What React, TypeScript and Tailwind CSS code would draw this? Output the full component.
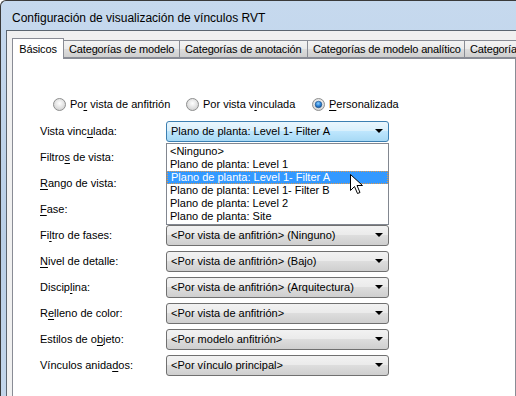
const body = { fontFamily: '"Liberation Sans", Arial, sans-serif' };

function U({ children }: { children: string }) {
  return <span className="underline underline-offset-[2px]">{children}</span>;
}

function Radio({ checked }: { checked?: boolean }) {
  return (
    <svg width="13" height="13" viewBox="0 0 13 13" className="shrink-0">
      <defs>
        <radialGradient id="rg" cx="50%" cy="40%" r="60%">
          <stop offset="0%" stopColor="#ffffff" />
          <stop offset="100%" stopColor="#d0d0d0" />
        </radialGradient>
        <radialGradient id="rd" cx="45%" cy="35%" r="65%">
          <stop offset="0%" stopColor="#8cd0ff" />
          <stop offset="60%" stopColor="#2a7fd4" />
          <stop offset="100%" stopColor="#0e4f93" />
        </radialGradient>
      </defs>
      <circle cx="6.5" cy="6.5" r="6" fill="url(#rg)" stroke="#8e8f8f" strokeWidth="1" />
      {checked && <circle cx="6.5" cy="6.5" r="3.3" fill="url(#rd)" stroke="#1c4f84" strokeWidth="0.6" />}
    </svg>
  );
}

function Arrow() {
  return (
    <svg width="8" height="4" viewBox="0 0 8 4" className="shrink-0">
      <path d="M0 0H8L4 4Z" fill="#000" />
    </svg>
  );
}

function Combo({ text, active }: { text: string; active?: boolean }) {
  return (
    <div
      className={`flex h-[21px] w-[223px] items-center justify-between rounded-[3px] border pl-[4px] pr-[5px] text-[11px] text-black ${
        active
          ? 'border-[#3c7fb1] bg-[linear-gradient(#eaf6fd_0%,#d9f0fc_45%,#bee6fd_50%,#a7d9f5_100%)]'
          : 'border-[#707070] bg-[linear-gradient(#f2f2f2_0%,#ebebeb_45%,#dddddd_50%,#cfcfcf_100%)]'
      }`}
    >
      <span className="whitespace-nowrap">{text}</span>
      <Arrow />
    </div>
  );
}

function Row({ label, value, active }: { label: React.ReactNode; value: string; active?: boolean }) {
  return (
    <div className="flex h-[26px] items-center">
      <div className="w-[126px] text-[11px] text-black">{label}</div>
      <Combo text={value} active={active} />
    </div>
  );
}

function Tab({ label, w, selected }: { label: string; w: string; selected?: boolean }) {
  return (
    <div
      className={`flex shrink-0 items-center overflow-hidden whitespace-nowrap border border-[#898c95] text-[11px] tracking-[-0.15px] text-black ${w} ${
        selected
          ? 'relative z-10 -mb-px h-[21px] justify-center border-b-0 bg-white'
          : '-ml-px h-[18px] bg-[linear-gradient(#f3f3f3_0%,#ebebeb_50%,#dddddd_51%,#cfcfcf_100%)] pl-[5px]'
      }`}
    >
      {label}
    </div>
  );
}

const items = [
  '<Ninguno>',
  'Plano de planta: Level 1',
  'Plano de planta: Level 1- Filter A',
  'Plano de planta: Level 1- Filter B',
  'Plano de planta: Level 2',
  'Plano de planta: Site',
];

export default function App() {
  return (
    <div
      className="relative flex h-[396px] w-[516px] flex-col overflow-hidden rounded-tl-[6px] border-l border-t border-[#3a3a3a] bg-[linear-gradient(#c6d9ee,#b9cfe7_60%,#c3d6eb)]"
      style={body}
    >
      <div className="flex h-[29px] shrink-0 items-center pl-[11px] pt-[5px] text-[12px] text-black">
        Configuración de visualización de vínculos RVT
      </div>

      <div className="ml-[5px] flex shrink-0 flex-col border-l border-t border-[#5b6570] bg-[#f0f0f0] pl-[5px] pt-[7px]">
        <div className="flex items-end">
          <Tab label="Básicos" w="w-[52px]" selected />
          <Tab label="Categorías de modelo" w="w-[117px]" />
          <Tab label="Categorías de anotación" w="w-[129px]" />
          <Tab label="Categorías de modelo analítico" w="w-[158px]" />
          <Tab label="Categorías de modelo" w="w-[80px]" />
        </div>

        <div className="relative h-[360px] shrink-0 border border-[#898c95] bg-white pl-[27px] pt-[32px]">
          <div className="flex h-[26px] items-center text-[11px] text-black">
            <div className="ml-[13px] flex w-[133px] items-center gap-[4px]">
              <Radio />
              <span>
                Po<U>r</U> vista de anfitrión
              </span>
            </div>
            <div className="flex w-[126px] items-center gap-[4px]">
              <Radio />
              <span>
                Por vista v<U>i</U>nculada
              </span>
            </div>
            <div className="flex items-center gap-[4px]">
              <Radio checked />
              <span>
                <U>P</U>ersonalizada
              </span>
            </div>
          </div>

          <div className="mt-[1px] flex flex-col">
            <Row label={<>Vista vinc<U>u</U>lada:</>} value="Plano de planta: Level 1- Filter A" active />
            <Row label={<>Filtro<U>s</U> de vista:</>} value="" />
            <Row label={<><U>R</U>ango de vista:</>} value="" />
            <Row label={<><U>F</U>ase:</>} value="" />
            <Row label={<>Fi<U>l</U>tro de fases:</>} value="<Por vista de anfitrión> (Ninguno)" />
            <Row label={<><U>N</U>ivel de detalle:</>} value="<Por vista de anfitrión> (Bajo)" />
            <Row label={<>Discip<U>l</U>ina:</>} value="<Por vista de anfitrión> (Arquitectura)" />
            <Row label={<>R<U>e</U>lleno de color:</>} value="<Por vista de anfitrión>" />
            <Row label={<>Estilos de o<U>b</U>jeto:</>} value="<Por modelo anfitrión>" />
            <Row label={<>Vínculos anida<U>d</U>os:</>} value="<Por vínculo principal>" />
          </div>

          <div className="absolute left-[153px] top-[84px] z-20 w-[223px] border border-[#828790] bg-white py-px text-[11px] text-black">
            {items.map((t, i) => (
              <div
                key={t}
                className={`flex h-[13px] items-center whitespace-nowrap pl-[3px] ${
                  i === 2 ? 'border border-dotted border-[#e09a4c] bg-[#3399ff] pl-[2px] text-white' : ''
                }`}
              >
                {t}
              </div>
            ))}
          </div>

          <svg
            className="absolute left-[337px] top-[115px] z-30"
            width="13"
            height="21"
            viewBox="0 0 13 21"
          >
            <path
              d="M0.5 0.5V16.5L4.5 12.5L7.5 19.5L10 18.5L7 11.5H12.5Z"
              fill="#fff"
              stroke="#000"
              strokeWidth="1"
              strokeLinejoin="miter"
            />
          </svg>
        </div>
      </div>
    </div>
  );
}
